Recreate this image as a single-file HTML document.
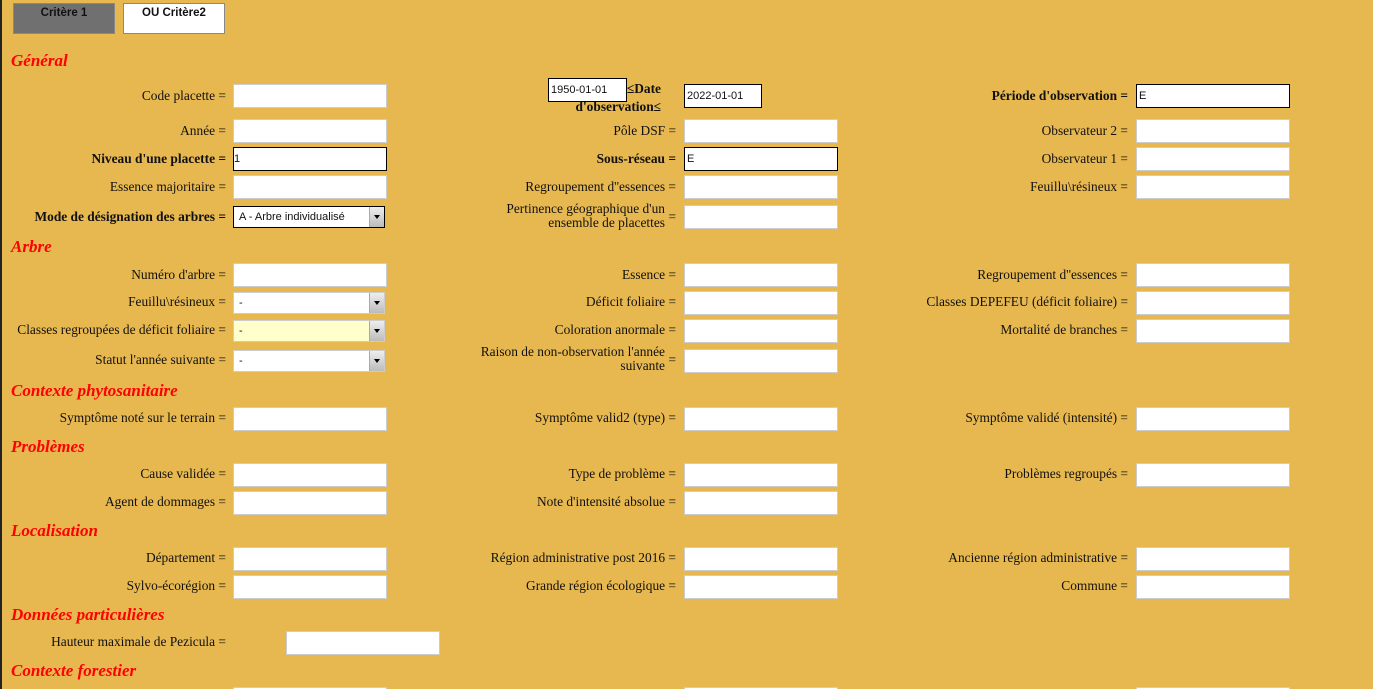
<!DOCTYPE html>
<html><head><meta charset="utf-8"><style>
html{overflow:hidden;height:689px}
body{margin:0;width:1373px;height:689px;background:#E8B850;position:relative;overflow:hidden;font-family:"Liberation Serif",serif;font-size:13.4px;color:#111}
.bl{position:absolute;left:0;top:0;width:2px;height:689px;background:#222}
.t{position:absolute;top:3px;height:29px;width:100px;text-align:center;font:bold 11.5px "Liberation Sans",sans-serif;line-height:18px}
.h{position:absolute;left:11px;color:#f00;font:italic bold 17px "Liberation Serif",serif}
.l{position:absolute;text-align:right;white-space:nowrap;line-height:15px}
.c1{right:1147px}.c2{right:697px}.c3{right:245px}
.i{position:absolute;width:152px;height:22px;border:1px solid #ccc;background:#fff;font:11px "Liberation Sans",sans-serif;line-height:22px;box-sizing:content-box}
.k{border-color:#000;width:150px;padding-left:2px}
.x1{left:233px}.x2{left:684px}.x3{left:1136px}
.s{position:absolute;left:233px;width:150px;height:20px;border:1px solid #ccc;background:#fff;font:11px "Liberation Sans",sans-serif;line-height:20px}
.s span{padding-left:5px}
.s b{position:absolute;right:0;top:0;width:14px;height:20px;background:linear-gradient(#eee,#bbb);border-left:1px solid #aaa}
.s b:after{content:"";position:absolute;left:4px;top:8px;border:3px solid transparent;border-top:4px solid #000}
</style></head><body>
<div class="bl"></div>
<div class="t" style="left:13px;background:#707070;border:1px solid #888">Critère 1</div>
<div class="t" style="left:123px;background:#fff;border:1px solid #888">OU Critère2</div>

<div class="h" style="top:51px">Général</div>
<div class="l c1" style="top:88px">Code placette =</div><div class="i x1" style="top:84px"></div>
<div class="i" style="left:548px;top:78px;width:75px;border-color:#000;padding-left:2px">1950-01-01</div>
<div class="l" style="right:712px;top:80px;font-weight:bold;line-height:18px">≤Date<br>d'observation≤</div>
<div class="i k" style="left:684px;top:84px;width:74px">2022-01-01</div>
<div class="l c3" style="top:88px;font-weight:bold">Période d'observation =</div><div class="i x3 k" style="top:84px">E</div>

<div class="l c1" style="top:123px">Année =</div><div class="i x1" style="top:119px"></div>
<div class="l c2" style="top:123px">Pôle DSF =</div><div class="i x2" style="top:119px"></div>
<div class="l c3" style="top:123px">Observateur 2 =</div><div class="i x3" style="top:119px"></div>

<div class="l c1" style="top:151px;font-weight:bold">Niveau d'une placette =</div><div class="i x1 k" style="top:147px;padding-left:0;width:152px">1</div>
<div class="l c2" style="top:151px;font-weight:bold">Sous-réseau =</div><div class="i x2 k" style="top:147px">E</div>
<div class="l c3" style="top:151px">Observateur 1 =</div><div class="i x3" style="top:147px"></div>

<div class="l c1" style="top:179px">Essence majoritaire =</div><div class="i x1" style="top:175px"></div>
<div class="l c2" style="top:179px">Regroupement d''essences =</div><div class="i x2" style="top:175px"></div>
<div class="l c3" style="top:179px">Feuillu\résineux =</div><div class="i x3" style="top:175px"></div>

<div class="l c1" style="top:209px;font-weight:bold">Mode de désignation des arbres =</div>
<div class="s" style="top:206px;border-color:#000"><span>A - Arbre individualisé</span><b></b></div>
<div class="l" style="right:708px;top:202px;line-height:14px">Pertinence géographique d'un<br>ensemble de placettes</div><div class="l" style="right:697px;top:209px">=</div><div class="i x2" style="top:205px"></div>

<div class="h" style="top:237px">Arbre</div>
<div class="l c1" style="top:267px">Numéro d'arbre =</div><div class="i x1" style="top:263px"></div>
<div class="l c2" style="top:267px">Essence =</div><div class="i x2" style="top:263px"></div>
<div class="l c3" style="top:267px">Regroupement d''essences =</div><div class="i x3" style="top:263px"></div>

<div class="l c1" style="top:294px">Feuillu\résineux =</div><div class="s" style="top:292px"><span>-</span><b></b></div>
<div class="l c2" style="top:294px">Déficit foliaire =</div><div class="i x2" style="top:291px"></div>
<div class="l c3" style="top:294px">Classes DEPEFEU (déficit foliaire) =</div><div class="i x3" style="top:291px"></div>

<div class="l c1" style="top:322px">Classes regroupées de déficit foliaire =</div><div class="s" style="top:320px;background:#ffffcc"><span>-</span><b></b></div>
<div class="l c2" style="top:322px">Coloration anormale =</div><div class="i x2" style="top:319px"></div>
<div class="l c3" style="top:322px">Mortalité de branches =</div><div class="i x3" style="top:319px"></div>

<div class="l c1" style="top:352px">Statut l'année suivante =</div><div class="s" style="top:350px"><span>-</span><b></b></div>
<div class="l" style="right:708px;top:345px;line-height:14px">Raison de non-observation l'année<br>suivante</div><div class="l" style="right:697px;top:352px">=</div><div class="i x2" style="top:349px"></div>

<div class="h" style="top:381px">Contexte phytosanitaire</div>
<div class="l c1" style="top:410px">Symptôme noté sur le terrain =</div><div class="i x1" style="top:407px"></div>
<div class="l c2" style="top:410px">Symptôme valid2 (type) =</div><div class="i x2" style="top:407px"></div>
<div class="l c3" style="top:410px">Symptôme validé (intensité) =</div><div class="i x3" style="top:407px"></div>

<div class="h" style="top:437px">Problèmes</div>
<div class="l c1" style="top:466px">Cause validée =</div><div class="i x1" style="top:463px"></div>
<div class="l c2" style="top:466px">Type de problème =</div><div class="i x2" style="top:463px"></div>
<div class="l c3" style="top:466px">Problèmes regroupés =</div><div class="i x3" style="top:463px"></div>
<div class="l c1" style="top:494px">Agent de dommages =</div><div class="i x1" style="top:491px"></div>
<div class="l c2" style="top:494px">Note d'intensité absolue =</div><div class="i x2" style="top:491px"></div>

<div class="h" style="top:521px">Localisation</div>
<div class="l c1" style="top:550px">Département =</div><div class="i x1" style="top:547px"></div>
<div class="l c2" style="top:550px">Région administrative post 2016 =</div><div class="i x2" style="top:547px"></div>
<div class="l c3" style="top:550px">Ancienne région administrative =</div><div class="i x3" style="top:547px"></div>
<div class="l c1" style="top:578px">Sylvo-écorégion =</div><div class="i x1" style="top:575px"></div>
<div class="l c2" style="top:578px">Grande région écologique =</div><div class="i x2" style="top:575px"></div>
<div class="l c3" style="top:578px">Commune =</div><div class="i x3" style="top:575px"></div>

<div class="h" style="top:605px">Données particulières</div>
<div class="l" style="right:1147px;top:634px">Hauteur maximale de Pezicula =</div><div class="i" style="left:286px;top:631px"></div>

<div class="h" style="top:661px">Contexte forestier</div>
<div class="i x1" style="top:687px"></div><div class="i x2" style="top:687px"></div><div class="i x3" style="top:687px"></div>
</body></html>
